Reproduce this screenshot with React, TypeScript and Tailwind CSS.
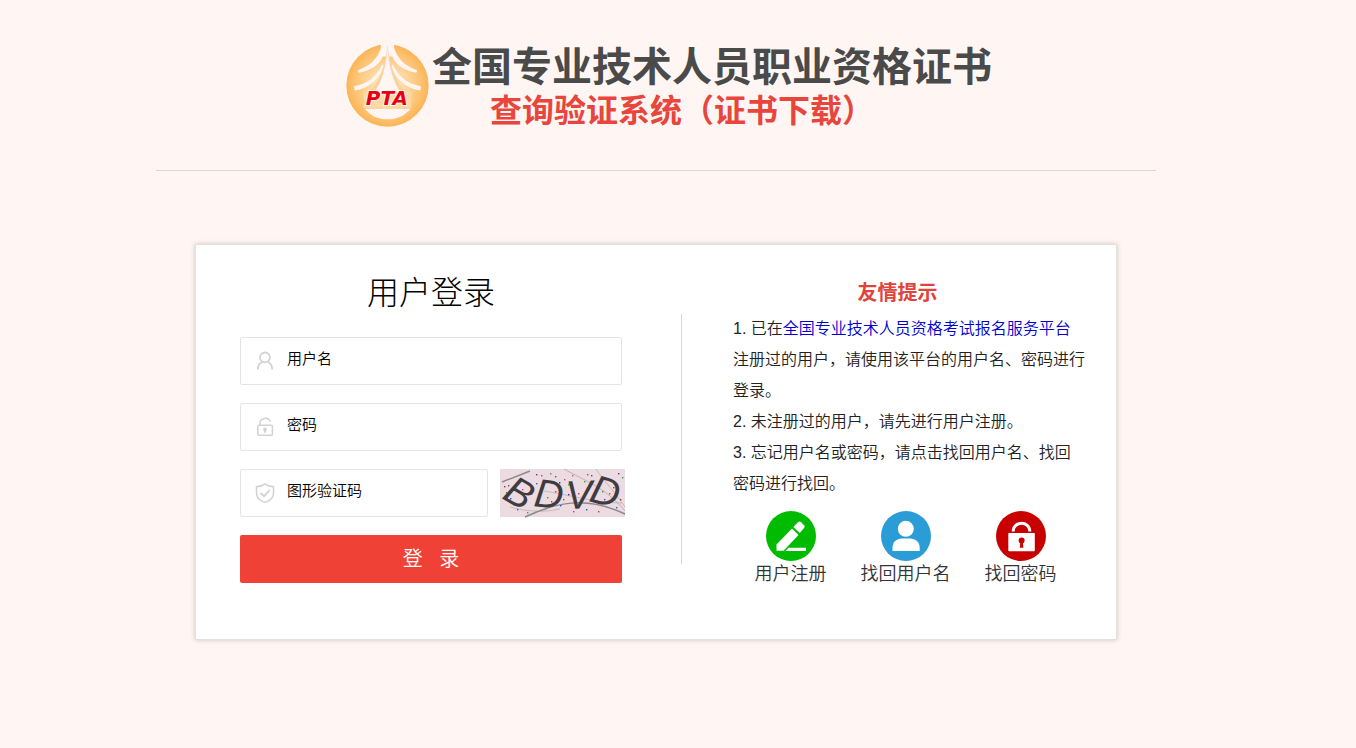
import { ReactNode } from "react"

const EmblemLogo = () => (
    <svg viewBox="19 22 250 250" className="size-[83px] shrink-0" aria-hidden="true">
        <defs>
            <radialGradient id="emblem" cx="50%" cy="50%" r="50%">
                <stop offset="0.3" stopColor="#fee0b4" />
                <stop offset="0.75" stopColor="#fdc678" />
                <stop offset="1" stopColor="#fcb455" />
            </radialGradient>
            <linearGradient id="tower" x1="0" y1="0" x2="0" y2="1">
                <stop offset="0" stopColor="#fbd3b4" />
                <stop offset="1" stopColor="#fdd191" />
            </linearGradient>
        </defs>
        <circle cx="144" cy="147" r="124" fill="url(#emblem)" />
        <g fill="#fff6f3">
            <path d="M124 18 H164 V34 L170 50 L158 60 H130 L118 50 L124 34 Z" />
            <path d="M118 48 C108 72 86 90 56 100 C53 105 56 109 62 108 C96 102 124 82 132 54 Z" />
            <path d="M170 48 C180 72 202 90 232 100 C235 105 232 109 226 108 C192 102 164 82 156 54 Z" />
            <path d="M128 84 C112 120 84 142 44 149 C43 155 44 160 47 162 C90 154 120 126 134 88 Z" />
            <path d="M160 84 C176 120 204 142 244 149 C245 155 244 160 241 162 C198 154 168 126 154 88 Z" />
        </g>
        <path d="M144 24 C138 86 118 138 88 168 H200 C170 138 150 86 144 24 Z" fill="url(#tower)" />
        <path d="M144 34 C140 92 126 138 104 168 H184 C162 138 148 92 144 34 Z" fill="#fff6f3" />
        <rect x="72" y="166" width="144" height="48" fill="#fdd9a4" />
        <path d="M76 217 H213 C198 238 170 249 144 249 C118 249 91 238 76 217 Z" fill="#fff6f3" />
        <text
            x="142"
            y="207"
            textAnchor="middle"
            fill="#e60012"
            stroke="#fff6f3"
            strokeWidth="6"
            paintOrder="stroke"
            className="font-['DejaVu_Sans'] text-[60px] font-bold italic"
        >
            PTA
        </text>
    </svg>
)

const UserIcon = () => (
    <svg viewBox="0 0 20 20" className="size-5 shrink-0" fill="none" stroke="#d2d2d2" strokeWidth="1.8" aria-hidden="true">
        <circle cx="10" cy="6.4" r="4.9" />
        <path d="M2.8 18.6 C2.8 14.5 4.8 12 7.4 11 M12.6 11 C15.2 12 17.2 14.5 17.2 18.6" />
    </svg>
)

const LockIcon = () => (
    <svg viewBox="0 0 20 20" className="size-5 shrink-0" fill="none" stroke="#d2d2d2" strokeWidth="1.5" aria-hidden="true">
        <rect x="2.8" y="8.2" width="14.6" height="10" rx="1" />
        <path d="M5 8 V6.5 C5 0 14 0 15.2 4.8" />
        <path d="M10 12 V15.8" strokeWidth="1.8" />
        <circle cx="10" cy="12.3" r="1.1" fill="#d2d2d2" />
    </svg>
)

const ShieldIcon = () => (
    <svg viewBox="0 0 20 20" className="size-5 shrink-0" fill="none" stroke="#d2d2d2" strokeWidth="1.5" aria-hidden="true">
        <path d="M10 0.9 C7.5 3 4.5 3.6 1.5 3.8 V10 C1.5 15 5 18 10 19.4 C15 18 18.5 15 18.5 10 V3.8 C15.5 3.6 12.5 3 10 0.9 Z" />
        <path d="M5.6 10 L9 13.2 L14.8 7" strokeWidth="1.8" />
    </svg>
)

const specks = [
    [6, 23, "#2a8a4a"], [4, 17, "#b03030"], [8, 16, "#5050c0"], [36, 5, "#7030a0"], [41, 6, "#c04040"], [36, 14, "#3a60d0"],
    [46, 13, "#c06020"], [50, 4, "#30a030"], [55, 7, "#a030a0"], [59, 13, "#3030b0"], [64, 10, "#d040a0"], [68, 15, "#30a060"],
    [31, 24, "#5030b0"], [38, 29, "#c03050"], [40, 36, "#3070d0"], [47, 28, "#30a030"], [51, 32, "#c03030"], [55, 22, "#a040c0"],
    [60, 36, "#3050c0"], [63, 30, "#c05020"], [68, 25, "#3030a0"], [72, 6, "#d050a0"], [78, 24, "#c03060"], [79, 34, "#30a070"],
    [84, 12, "#40a030"], [87, 5, "#c04040"], [91, 6, "#5040c0"], [94, 24, "#3080d0"], [98, 16, "#c030a0"], [102, 22, "#30a030"],
    [104, 30, "#4040c0"], [109, 24, "#c05030"], [113, 18, "#a030c0"], [116, 38, "#3060c0"], [120, 30, "#c03030"], [122, 8, "#30a040"],
    [118, 4, "#5030b0"], [13, 35, "#d050a0"], [17, 40, "#3060c0"], [24, 33, "#c04040"], [27, 43, "#30a060"], [73, 42, "#c030a0"],
    [86, 40, "#3050b0"], [98, 42, "#c04030"], [22, 20, "#c05080"], [10, 29, "#4040c0"],
] as const

const Captcha = () => (
    <svg viewBox="0 0 125 48" className="h-12 w-[125px] shrink-0 overflow-visible bg-[#eddbe2]" role="img" aria-label="图形验证码">
        <g fill="none" stroke="#8d888b">
            <path d="M2 13 L30 2" strokeWidth="1.4" />
            <path d="M25 48 C55 34 85 26 125 45" strokeWidth="1.5" />
            <path d="M64 0 C85 12 105 18 125 42" strokeWidth="0.5" />
            <path d="M44 22 C70 26 95 34 122 34" strokeWidth="0.4" />
            <path d="M96 0 C104 12 114 22 125 38" strokeWidth="0.4" />
            <path d="M10 38 C24 42 42 44 60 40" strokeWidth="0.4" />
        </g>
        {specks.map(([x, y, color]) => (
            <rect key={`${x}-${y}`} x={x} y={y} width="1.4" height="1.4" fill={color} />
        ))}
        <g fill="#3e3c3f" className="font-['Liberation_Sans'] text-[40px] italic">
            <text x="1" y="29" transform="rotate(30 1 29)">B</text>
            <text x="33" y="37" transform="rotate(7 33 37)">D</text>
            <text x="66" y="40" transform="rotate(-2 66 40)">V</text>
            <text x="88" y="32" transform="rotate(15 88 32)">D</text>
        </g>
    </svg>
)

const RegisterIcon = () => (
    <svg viewBox="0 0 50 50" className="size-[50px]" aria-hidden="true">
        <circle cx="25" cy="25" r="25" fill="#00bb00" />
        <g fill="#fff">
            <path d="M26 17.5 L32.5 24 L17.5 39.7 H10.5 V33.5 Z" />
            <path d="M27.3 16 L32 11.2 Q33.5 9.8 35 11.2 L38.3 14.5 Q39.2 15.6 38.2 16.8 L33.8 22 Z" />
            <path d="M22.5 36.8 H40 V40 H19.5 Z" />
        </g>
    </svg>
)

const FindUserIcon = () => (
    <svg viewBox="0 0 50 50" className="size-[50px]" aria-hidden="true">
        <circle cx="25" cy="25" r="25" fill="#2a9cd6" />
        <circle cx="24.8" cy="17.8" r="8" fill="#fff" />
        <path d="M11.5 40 V37 C11.5 31 15.5 27.5 21 27.5 H29 C34.5 27.5 38.7 31 38.7 37 V40 Z" fill="#fff" />
    </svg>
)

const FindPasswordIcon = () => (
    <svg viewBox="0 0 50 50" className="size-[50px]" aria-hidden="true">
        <circle cx="25" cy="25" r="25" fill="#c80000" />
        <path d="M17.2 20.5 C17.2 9.5 33.8 9.5 33.8 20.5" fill="none" stroke="#fff" strokeWidth="3" />
        <rect x="12.3" y="22" width="26.5" height="18.2" rx="0.8" fill="#fff" />
        <circle cx="25.6" cy="29.6" r="3" fill="#c80000" />
        <path d="M24.5 30 H26.7 L27.4 36.8 H23.8 Z" fill="#c80000" />
    </svg>
)

type FieldProps = {
    name: string
    label: string
    type?: string
    icon: ReactNode
    className?: string
}

const Field = ({ name, label, type = "text", icon, className = "" }: FieldProps) => (
    <label
        htmlFor={name}
        className={`flex h-12 items-center gap-3 rounded-xs border border-[#e4e4e4] bg-white pl-3.5 ${className}`}
    >
        {icon}
        <input
            id={name}
            name={name}
            type={type}
            aria-label={label}
            placeholder={label}
            className="h-full w-full min-w-0 pb-1.5 text-[15px] text-black outline-none placeholder:text-black"
        />
    </label>
)

const shortcuts = [
    { label: "用户注册", icon: <RegisterIcon /> },
    { label: "找回用户名", icon: <FindUserIcon /> },
    { label: "找回密码", icon: <FindPasswordIcon /> },
]

const LoginForm = () => (
    <form className="w-[382px] shrink-0 pt-6" onSubmit={(e) => e.preventDefault()}>
        <h2 className="text-center text-[32px] leading-12 font-extralight text-black">用户登录</h2>
        <div className="mt-5 flex flex-col gap-[18px]">
            <Field name="username" label="用户名" icon={<UserIcon />} />
            <Field name="password" label="密码" type="password" icon={<LockIcon />} />
            <div className="flex gap-3">
                <Field name="captcha" label="图形验证码" icon={<ShieldIcon />} className="w-[248px] shrink-0" />
                <Captcha />
            </div>
            <button type="submit" className="h-12 rounded-xs bg-[#ef4136] text-xl text-white">
                登&nbsp;&nbsp;&nbsp;录
            </button>
        </div>
    </form>
)

const Tips = () => (
    <div className="min-w-0 flex-1 pt-7 pr-6">
        <h3 className="pr-[30px] text-center text-xl leading-10 font-bold text-[#e0433b]">友情提示</h3>
        <div className="text-base leading-[31px] text-[#222]">
            <p>
                1. 已在<a href="#platform" className="text-[#0000cc]">全国专业技术人员资格考试报名服务平台</a>
                <br />
                注册过的用户，请使用该平台的用户名、密码进行登录。
            </p>
            <p>2. 未注册过的用户，请先进行用户注册。</p>
            <p>
                3. 忘记用户名或密码，请点击找回用户名、找回
                <br />
                密码进行找回。
            </p>
        </div>
        <div className="mt-3 grid max-w-[345px] grid-cols-3">
            {shortcuts.map((item) => (
                <a key={item.label} href="#shortcut" className="flex flex-col items-center text-lg leading-[26px] text-[#333]">
                    {item.icon}
                    {item.label}
                </a>
            ))}
        </div>
    </div>
)

const App = () => {
    return (
        <div
            lang="zh-CN"
            className="min-h-screen bg-[#fff6f3] pr-11 font-['Liberation_Sans','Noto_Sans_CJK_SC',sans-serif] font-[350]"
        >
            <div className="mx-auto max-w-[1000px]">
                <header className="flex justify-center gap-[3px] border-b border-[#dcd6d4] pt-11 pb-[38px] pl-[26px]">
                    <EmblemLogo />
                    <h1 className="font-bold">
                        <span className="block text-[40px] leading-[46px] text-[#4a4a4a]">全国专业技术人员职业资格证书</span>
                        <span className="block pl-[58px] text-[32px] leading-[42px] text-[#e8453c]">查询验证系统（证书下载）</span>
                    </h1>
                </header>
                <main className="mx-auto mt-[73px] flex max-w-[922px] border border-[#e6e1df] bg-white pb-13 pl-11 shadow-[0_0_5px_rgba(0,0,0,0.2)]">
                    <LoginForm />
                    <div className="mt-[69px] mr-[51px] ml-[59px] h-[250px] w-px shrink-0 bg-[#d8d8d8]" />
                    <Tips />
                </main>
            </div>
        </div>
    )
}

export default App
